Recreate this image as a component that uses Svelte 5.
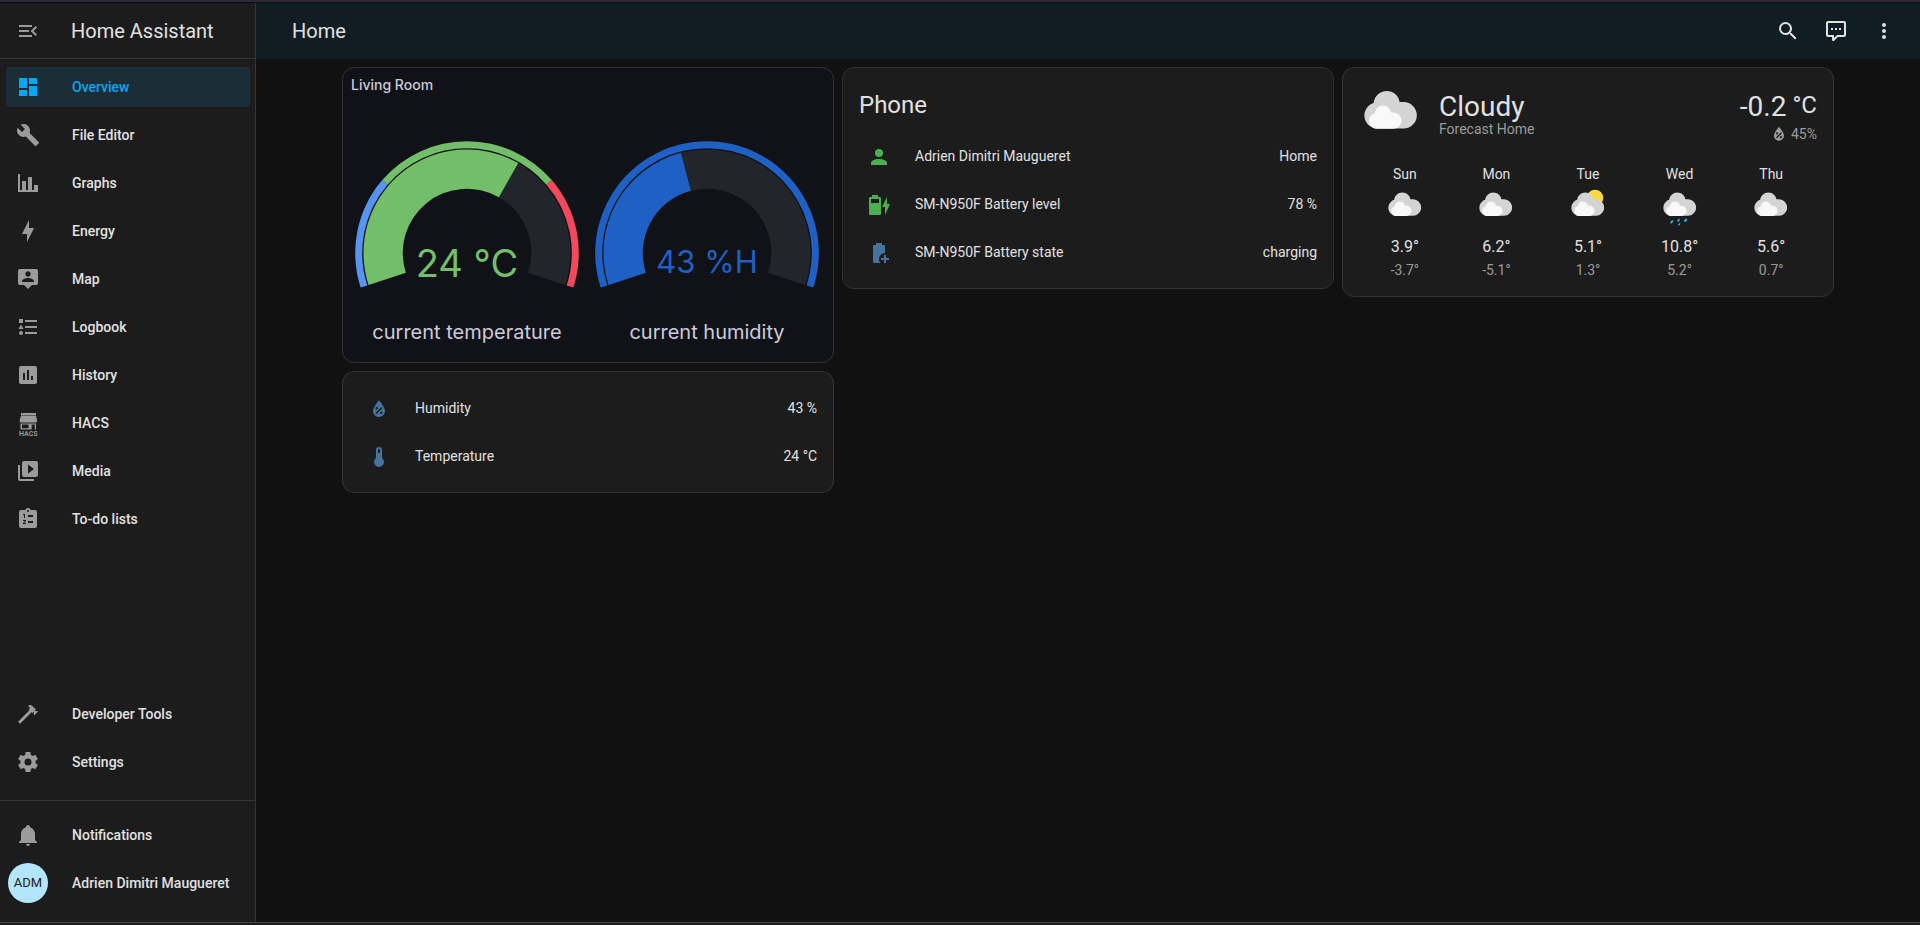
<script>
  const icons = {
    menuOpen: 'M21,15.61L19.59,17L14.58,12L19.59,7L21,8.39L17.44,12L21,15.61M3,6H16V8H3V6M3,13V11H13V13H3M3,18V16H16V18H3Z',
    dashboard: 'M13,3V9H21V3M13,21H21V11H13M3,21H11V15H3M3,13H11V3H3V13Z',
    wrench: 'M22.7,19L13.6,9.9C14.5,7.6 14,4.9 12.1,3C10.1,1 7.1,0.6 4.7,1.7L9,6L6,9L1.6,4.7C0.4,7.1 0.9,10.1 2.9,12.1C4.8,14 7.5,14.5 9.8,13.6L18.9,22.7C19.3,23.1 19.9,23.1 20.3,22.7L22.6,20.4C23.1,20 23.1,19.3 22.7,19Z',
    chartBar: 'M22,21H2V3H4V19H6V10H10V19H12V6H16V19H18V14H22V21Z',
    bolt: 'M11 15H6L13 1V9H18L11 23V15Z',
    map: 'M20,2A2,2 0 0,1 22,4V16A2,2 0 0,1 20,18H16L12,22L8,18H4A2,2 0 0,1 2,16V4A2,2 0 0,1 4,2H20M12,4.3C10.5,4.3 9.3,5.5 9.3,7C9.3,8.5 10.5,9.7 12,9.7C13.5,9.7 14.7,8.5 14.7,7C14.7,5.5 13.5,4.3 12,4.3M18,15V14.1C18,12.1 14,11 12,11C10,11 6,12.1 6,14.1V15H18Z',
    logbook: 'M5,9.5L7.5,14H2.5L5,9.5M3,4H7V8H3V4M5,20A2,2 0 0,0 7,18A2,2 0 0,0 5,16A2,2 0 0,0 3,18A2,2 0 0,0 5,20M9,5V7H21V5H9M9,19H21V17H9V19M9,13H21V11H9V13Z',
    history: 'M19,3H5A2,2 0 0,0 3,5V19A2,2 0 0,0 5,21H19A2,2 0 0,0 21,19V5A2,2 0 0,0 19,3M9,17H7V10H9V17M13,17H11V7H13V17M17,17H15V13H17V17Z',
    media: 'M4,6H2V20A2,2 0 0,0 4,22H18V20H4V6M20,2H8A2,2 0 0,0 6,4V16A2,2 0 0,0 8,18H20A2,2 0 0,0 22,16V4A2,2 0 0,0 20,2M12,14.5V5.5L18,10L12,14.5Z',
    todo: 'M19,3H14.82C14.4,1.84 13.3,1 12,1C10.7,1 9.6,1.84 9.18,3H5A2,2 0 0,0 3,5V19A2,2 0 0,0 5,21H19A2,2 0 0,0 21,19V5A2,2 0 0,0 19,3M12,3A1,1 0 0,1 13,4A1,1 0 0,1 12,5A1,1 0 0,1 11,4A1,1 0 0,1 12,3M7,8V7H9V11H8V8H7M7,13H10V14.1L8.2,16H10V17H7V15.9L8.8,14H7V13M12,8H17V10H12V8M12,14H17V16H12V14Z',
    hammer: 'M2,19.63L13.43,8.2L12.72,7.5L14.14,6.07L12,3.89C13.2,2.7 15.09,2.7 16.27,3.89L19.87,7.5L18.45,8.91H21.29L22,9.62L18.45,13.21L17.74,12.5V9.62L16.27,11.04L15.56,10.33L4.13,21.76L2,19.63Z',
    cog: 'M12,15.5A3.5,3.5 0 0,1 8.5,12A3.5,3.5 0 0,1 12,8.5A3.5,3.5 0 0,1 15.5,12A3.5,3.5 0 0,1 12,15.5M19.43,12.97C19.47,12.65 19.5,12.33 19.5,12C19.5,11.67 19.47,11.34 19.43,11L21.54,9.37C21.73,9.22 21.78,8.95 21.66,8.73L19.66,5.27C19.54,5.05 19.27,4.96 19.05,5.05L16.56,6.05C16.04,5.66 15.5,5.32 14.87,5.07L14.5,2.42C14.46,2.18 14.25,2 14,2H10C9.75,2 9.54,2.18 9.5,2.42L9.13,5.07C8.5,5.32 7.96,5.66 7.44,6.05L4.95,5.05C4.73,4.96 4.46,5.05 4.34,5.27L2.34,8.73C2.21,8.95 2.27,9.22 2.46,9.37L4.57,11C4.53,11.34 4.5,11.67 4.5,12C4.5,12.33 4.53,12.65 4.57,12.97L2.46,14.63C2.27,14.78 2.21,15.05 2.34,15.27L4.34,18.73C4.46,18.95 4.73,19.03 4.95,18.95L7.44,17.94C7.96,18.34 8.5,18.68 9.13,18.93L9.5,21.58C9.54,21.82 9.75,22 10,22H14C14.25,22 14.46,21.82 14.5,21.58L14.87,18.93C15.5,18.67 16.04,18.34 16.56,17.94L19.05,18.95C19.27,19.03 19.54,18.95 19.66,18.73L21.66,15.27C21.78,15.05 21.73,14.78 21.54,14.63L19.43,12.97Z',
    bell: 'M21,19V20H3V19L5,17V11C5,7.9 7.03,5.17 10,4.29C10,4.19 10,4.1 10,4A2,2 0 0,1 12,2A2,2 0 0,1 14,4C14,4.1 14,4.19 14,4.29C16.97,5.17 19,7.9 19,11V17L21,19M14,21A2,2 0 0,1 12,23A2,2 0 0,1 10,21',
    magnify: 'M9.5,3A6.5,6.5 0 0,1 16,9.5C16,11.11 15.41,12.59 14.44,13.73L14.71,14H15.5L20.5,19L19,20.5L14,15.5V14.71L13.73,14.44C12.59,15.41 11.11,16 9.5,16A6.5,6.5 0 0,1 3,9.5A6.5,6.5 0 0,1 9.5,3M9.5,5C7,5 5,7 5,9.5C5,12 7,14 9.5,14C12,14 14,12 14,9.5C14,7 12,5 9.5,5Z',
    comment: 'M9,22A1,1 0 0,1 8,21V18H4A2,2 0 0,1 2,16V4C2,2.89 2.9,2 4,2H20A2,2 0 0,1 22,4V16A2,2 0 0,1 20,18H13.9L10.2,21.71C10,21.9 9.75,22 9.5,22V22H9M10,16V19.08L13.08,16H20V4H4V16H10M17,11H15V9H17V11M13,11H11V9H13V11M9,11H7V9H9V11Z',
    dots: 'M12,16A2,2 0 0,1 14,18A2,2 0 0,1 12,20A2,2 0 0,1 10,18A2,2 0 0,1 12,16M12,10A2,2 0 0,1 14,12A2,2 0 0,1 12,14A2,2 0 0,1 10,12A2,2 0 0,1 12,10M12,4A2,2 0 0,1 14,6A2,2 0 0,1 12,8A2,2 0 0,1 10,6A2,2 0 0,1 12,4Z',
    account: 'M12,4A4,4 0 0,1 16,8A4,4 0 0,1 12,12A4,4 0 0,1 8,8A4,4 0 0,1 12,4M12,14C16.42,14 20,15.79 20,18V20H4V18C4,15.79 7.58,14 12,14Z',
    batteryCharging: 'M23,11H20V4L15,14H18V22M12.67,4H11V2H5V4H3.33A1.33,1.33 0 0,0 2,5.33V20.67C2,21.4 2.6,22 3.33,22H12.67C13.4,22 14,21.4 14,20.67V5.33A1.33,1.33 0 0,0 12.67,4M12,10H4V6H12V10Z',
    batteryPlus: 'M16.67,4H15V2H9V4H7.33A1.33,1.33 0 0,0 6,5.33V20.67C6,21.4 6.6,22 7.33,22H13.5A6,6 0 0,1 18,12.1V5.33A1.33,1.33 0 0,0 16.67,4M17,14V17H14V19H17V22H19V19H22V17H19V14H17Z',
    waterPercent: 'M12,3.25C12,3.25 6,10 6,14C6,17.32 8.69,20 12,20A6,6 0 0,0 18,14C18,10 12,3.25 12,3.25M14.47,9.97L15.53,11.03L9.53,17.03L8.47,15.97M9.75,10A1.25,1.25 0 0,1 11,11.25A1.25,1.25 0 0,1 9.75,12.5A1.25,1.25 0 0,1 8.5,11.25A1.25,1.25 0 0,1 9.75,10M14.25,14.5A1.25,1.25 0 0,1 15.5,15.75A1.25,1.25 0 0,1 14.25,17A1.25,1.25 0 0,1 13,15.75A1.25,1.25 0 0,1 14.25,14.5Z',
    thermometer: 'M15 13V5A3 3 0 0 0 9 5V13A5 5 0 1 0 15 13M12 4A1 1 0 0 1 13 5V8H11V5A1 1 0 0 1 12 4Z'
  };

  const pages = [
    { label: 'Overview', icon: 'dashboard', active: true },
    { label: 'File Editor', icon: 'wrench' },
    { label: 'Graphs', icon: 'chartBar' },
    { label: 'Energy', icon: 'bolt' },
    { label: 'Map', icon: 'map' },
    { label: 'Logbook', icon: 'logbook' },
    { label: 'History', icon: 'history' },
    { label: 'HACS', icon: 'hacs' },
    { label: 'Media', icon: 'media' },
    { label: 'To-do lists', icon: 'todo' }
  ];
  const tools = [
    { label: 'Developer Tools', icon: 'hammer' },
    { label: 'Settings', icon: 'cog' }
  ];

  const climate = [
    { label: 'Humidity', value: '43 %', icon: 'waterPercent', tone: 'blue' },
    { label: 'Temperature', value: '24 °C', icon: 'thermometer', tone: 'blue' }
  ];
  const phone = [
    { label: 'Adrien Dimitri Maugueret', value: 'Home', icon: 'account', tone: 'green' },
    { label: 'SM-N950F Battery level', value: '78 %', icon: 'batteryCharging', tone: 'green' },
    { label: 'SM-N950F Battery state', value: 'charging', icon: 'batteryPlus', tone: 'blue' }
  ];

  const forecast = [
    { day: 'Sun', sky: 'cloudy', high: '3.9°', low: '-3.7°' },
    { day: 'Mon', sky: 'cloudy', high: '6.2°', low: '-5.1°' },
    { day: 'Tue', sky: 'partly', high: '5.1°', low: '1.3°' },
    { day: 'Wed', sky: 'rainy', high: '10.8°', low: '5.2°' },
    { day: 'Thu', sky: 'cloudy', high: '5.6°', low: '0.7°' }
  ];

  // Gauge angles are degrees clockwise from the top; the dial spans -108 to 108.
  const gauges = [
    {
      label: 'current temperature', value: '24 °C', color: '#73bf69', size: 38, baseline: 175, end: 29.7,
      ring: [[-108, -49.3, '#5794f2'], [-49.3, 49.3, '#73bf69'], [49.3, 108, '#f2495c']]
    },
    {
      label: 'current humidity', value: '43 %H', color: '#1f60c4', size: 31, baseline: 171, end: -14.6,
      ring: [[-108, 108, '#1f60c4']]
    }
  ];

  function point(r, deg) {
    const a = (deg * Math.PI) / 180;
    return `${(120 + r * Math.sin(a)).toFixed(2)},${(151 - r * Math.cos(a)).toFixed(2)}`;
  }
  function band(from, to, outer, inner) {
    const large = to - from > 180 ? 1 : 0;
    return `M${point(outer, from)}A${outer},${outer} 0 ${large},1 ${point(outer, to)}L${point(inner, to)}A${inner},${inner} 0 ${large},0 ${point(inner, from)}Z`;
  }
</script>

{#snippet icon(name)}
  <svg class="icon" viewBox="0 0 24 24" aria-hidden="true">
    {#if name === 'hacs'}
      <path d="M5,2H20V4H5ZM5,4.6H20L21,9V10.5Q21,11.5 20,11.5H4.5Q3.7,11.5 3.7,10.5V9ZM4.5,12.5H20V18.5H18.8V13.6H15.6V18.5H4.5ZM6,13.6V17.2H12.5V13.6Z" fill-rule="evenodd" />
      <text class="hacs" x="12.3" y="24.6" text-anchor="middle">HACS</text>
    {:else}
      <path d={icons[name]} fill-rule="evenodd" />
    {/if}
  </svg>
{/snippet}

{#snippet sky(kind)}
  <svg class="sky" viewBox="0 0 17 17" aria-hidden="true">
    {#if kind === 'partly'}
      <circle cx="11.5" cy="4.2" r="3.48" fill="#fdd93c" />
    {/if}
    <path fill="#d4d4d4" d="m3.8863 5.035c-0.54892 0.16898-1.04 0.46637-1.4372 0.8636-0.63077 0.63041-1.0206 1.4933-1.0206 2.455 0 1.9251 1.5589 3.4682 3.4837 3.4682h6.9688c1.9251 0 3.484-1.5981 3.484-3.5232 0-1.9251-1.5589-3.5232-3.484-3.5232h-1.0834c-0.25294-1.6916-1.6986-2.9083-3.4463-2.9083-1.7995 0-3.2805 1.4153-3.465 3.1679" />
    <path fill="#f9f9f9" d="m4.1996 7.6995c-0.33902 0.10407-0.64276 0.28787-0.88794 0.5334-0.39017 0.38982-0.63147 0.92322-0.63147 1.5176 0 1.1896 0.96414 2.1431 2.1537 2.1431h4.3071c1.1896 0 2.153-0.98742 2.153-2.1777 0-1.1896-0.96344-2.1777-2.153-2.1777h-0.66992c-0.15593-1.0449-1.0499-1.7974-2.1297-1.7974-1.112 0-2.0274 0.87524-2.1417 1.9586" />
    {#if kind === 'rainy'}
      <g fill="#30b3ff">
        <ellipse cx="5" cy="14.4" rx="0.45" ry="0.85" transform="rotate(40 5 14.4)" />
        <ellipse cx="7.9" cy="13.7" rx="0.4" ry="0.7" transform="rotate(40 7.9 13.7)" />
        <ellipse cx="10.9" cy="13.7" rx="0.45" ry="0.85" transform="rotate(40 10.9 13.7)" />
        <ellipse cx="8.2" cy="15.4" rx="0.35" ry="0.6" transform="rotate(40 8.2 15.4)" />
      </g>
    {/if}
  </svg>
{/snippet}

{#snippet navItem(item)}
  <li>
    <a class="nav-item" class:active={item.active} href="#{item.icon}" aria-current={item.active ? 'page' : undefined}>
      {@render icon(item.icon)}
      <span>{item.label}</span>
    </a>
  </li>
{/snippet}

{#snippet entities(rows)}
  <ul class="entities">
    {#each rows as row}
      <li class="entity">
        <span class="badge {row.tone}">{@render icon(row.icon)}</span>
        <span class="entity-name">{row.label}</span>
        <span>{row.value}</span>
      </li>
    {/each}
  </ul>
{/snippet}

<div class="page">
  <div class="shell">
    <aside class="sidebar">
      <div class="sidebar-head">
        <button class="menu-button" aria-label="Toggle sidebar">{@render icon('menuOpen')}</button>
        <span class="brand">Home Assistant</span>
      </div>
      <nav class="nav">
        <ul class="nav-list">
          {#each pages as item}{@render navItem(item)}{/each}
        </ul>
        <ul class="nav-list">
          {#each tools as item}{@render navItem(item)}{/each}
        </ul>
      </nav>
      <ul class="nav-list account">
        {@render navItem({ label: 'Notifications', icon: 'bell' })}
        <li>
          <a class="nav-item user" href="#profile">
            <span class="avatar">ADM</span>
            <span>Adrien Dimitri Maugueret</span>
          </a>
        </li>
      </ul>
    </aside>

    <div class="main">
      <header class="toolbar">
        <h1>Home</h1>
        <button aria-label="Search">{@render icon('magnify')}</button>
        <button aria-label="Assist">{@render icon('comment')}</button>
        <button aria-label="More options">{@render icon('dots')}</button>
      </header>

      <main class="columns">
        <div class="column">
          <section class="card living">
            <h2>Living Room</h2>
            <div class="gauges">
              {#each gauges as g}
                <figure>
                  <svg class="gauge" viewBox="0 0 240 208" role="img" aria-label="{g.label} {g.value}">
                    <path d={band(-108, 108, 103.5, 64.3)} fill="#22252b" />
                    <path d={band(-108, g.end, 103.5, 64.3)} fill={g.color} />
                    {#each g.ring as [from, to, color]}
                      <path d={band(from, to, 111.8, 104.8)} fill={color} />
                    {/each}
                    <text x="120" y={g.baseline} font-size={g.size} fill={g.color} text-anchor="middle">{g.value}</text>
                  </svg>
                  <figcaption>{g.label}</figcaption>
                </figure>
              {/each}
            </div>
          </section>
          <section class="card">{@render entities(climate)}</section>
        </div>

        <div class="column">
          <section class="card">
            <h2 class="card-title">Phone</h2>
            {@render entities(phone)}
          </section>
        </div>

        <div class="column">
          <section class="card weather">
            <div class="now">
              <div class="now-icon">{@render sky('cloudy')}</div>
              <div class="now-text">
                <div class="now-state">Cloudy</div>
                <div class="now-place">Forecast Home</div>
              </div>
              <div class="now-values">
                <div class="now-temp"><span>-0.2</span><span class="unit">°C</span></div>
                <div class="now-humidity">{@render icon('waterPercent')}<span>45%</span></div>
              </div>
            </div>
            <div class="forecast">
              {#each forecast as f}
                <div class="day">
                  <div class="day-name">{f.day}</div>
                  <div class="day-icon">{@render sky(f.sky)}</div>
                  <div class="high">{f.high}</div>
                  <div class="low">{f.low}</div>
                </div>
              {/each}
            </div>
          </section>
        </div>
      </main>
    </div>
  </div>
</div>

<style>
  :global(body) {
    margin: 0;
    background: #111111;
  }
  .page {
    box-sizing: border-box;
    min-height: 100vh;
    display: flex;
    border-top: 2px solid #2b2a33;
    border-bottom: 2px solid #1c1a1d;
    background: #111111;
    color: #e1e1e1;
    font-family: Roboto, "Noto Sans", sans-serif;
    font-size: 14px;
    line-height: 20px;
  }
  .shell {
    flex: 1;
    display: flex;
    border-top: 1px solid #0c0c0d;
    border-bottom: 1px solid #484848;
  }
  ul {
    list-style: none;
    margin: 0;
    padding: 0;
  }
  h1,
  h2 {
    margin: 0;
    font-weight: 400;
  }
  button {
    display: flex;
    align-items: center;
    justify-content: center;
    width: 48px;
    height: 48px;
    padding: 0;
    border: 0;
    background: none;
    color: inherit;
    cursor: pointer;
  }
  .icon {
    display: block;
    flex: none;
    width: 24px;
    height: 24px;
    fill: currentColor;
    overflow: visible;
  }
  .hacs {
    font: 700 7px Roboto, sans-serif;
  }

  .sidebar {
    box-sizing: border-box;
    flex: none;
    width: 256px;
    display: flex;
    flex-direction: column;
    border-right: 1px solid #363636;
    background: #1c1c1c;
  }
  .sidebar-head {
    box-sizing: border-box;
    height: 56px;
    display: flex;
    align-items: center;
    gap: 19px;
    padding-left: 4px;
    border-bottom: 1px solid #363636;
  }
  .menu-button {
    color: #9b9b9b;
  }
  .brand {
    font-size: 20px;
  }
  .nav {
    flex: 1;
    display: flex;
    flex-direction: column;
    justify-content: space-between;
    padding: 8px 0 18px;
  }
  .nav-list {
    display: flex;
    flex-direction: column;
    gap: 8px;
    padding: 0 5px 0 6px;
  }
  .nav-item {
    display: flex;
    align-items: center;
    gap: 32px;
    height: 40px;
    padding-left: 10px;
    border-radius: 4px;
    color: #e1e1e1;
    font-weight: 500;
    text-decoration: none;
  }
  .nav-item .icon {
    color: #9b9b9b;
  }
  .nav-item.active {
    background: #1b2d36;
  }
  .nav-item.active,
  .nav-item.active .icon {
    color: #03a9f4;
  }
  .account {
    padding-top: 14px;
    padding-bottom: 19px;
    border-top: 1px solid #363636;
  }
  .nav-item.user {
    gap: 24px;
    padding-left: 2px;
  }
  .avatar {
    width: 40px;
    border-radius: 50%;
    background: #b3e5fc;
    color: #212121;
    font-size: 13px;
    font-weight: 400;
    line-height: 40px;
    text-align: center;
  }

  .main {
    flex: 1;
    min-width: 0;
  }
  .toolbar {
    display: flex;
    align-items: center;
    height: 56px;
    padding: 0 12px 0 36px;
    background: #101e24;
  }
  .toolbar h1 {
    flex: 1;
    font-size: 20px;
  }
  .columns {
    display: grid;
    grid-template-columns: repeat(3, minmax(0, 1fr));
    gap: 8px;
    max-width: 1492px;
    margin: 0 auto;
    padding: 8px 4px;
  }
  .column {
    display: flex;
    flex-direction: column;
    gap: 8px;
  }
  .card {
    border: 1px solid #333333;
    border-radius: 12px;
    background: #1c1c1c;
  }

  .living {
    background: #111217;
    color: #ccccdc;
    font-family: Inter, sans-serif;
  }
  .living h2 {
    padding: 7px 8px;
    font-size: 14px;
    font-weight: 500;
  }
  .gauges {
    display: grid;
    grid-template-columns: 1fr 1fr;
    padding: 0 6px 8px 4px;
  }
  figure {
    margin: 0;
    text-align: center;
  }
  .gauge {
    display: block;
    width: 100%;
  }
  figcaption {
    font-size: 20px;
    line-height: 44px;
  }

  .card-title {
    padding: 13px 16px 7px;
    font-size: 24px;
    line-height: 48px;
  }
  .entities {
    display: flex;
    flex-direction: column;
    gap: 8px;
    padding: 16px;
  }
  .card-title + .entities {
    padding-top: 0;
  }
  .entity {
    display: flex;
    align-items: center;
    height: 40px;
  }
  .badge {
    display: flex;
    justify-content: center;
    width: 40px;
    padding-top: 2px;
  }
  .green {
    color: #4caf50;
  }
  .blue {
    color: #44739e;
  }
  .entity-name {
    flex: 1;
    padding-left: 16px;
  }

  .weather {
    padding: 16px;
  }
  .sky {
    display: block;
    width: 100%;
    height: 100%;
  }
  .now {
    display: flex;
    gap: 16px;
    height: 64px;
  }
  .now-icon {
    width: 64px;
    height: 64px;
  }
  .now-text {
    flex: 1;
    padding-top: 6px;
  }
  .now-state,
  .now-temp {
    font-size: 28px;
    line-height: 34px;
  }
  .now-place {
    color: #9b9b9b;
    line-height: 10px;
  }
  .now-values {
    padding-top: 6px;
  }
  .now-temp {
    display: flex;
    justify-content: flex-end;
    gap: 6px;
  }
  .unit {
    font-size: 24px;
    line-height: 30px;
  }
  .now-humidity {
    display: flex;
    align-items: center;
    justify-content: flex-end;
    gap: 2px;
    color: #9b9b9b;
    line-height: 18px;
  }
  .now-humidity .icon {
    width: 20px;
    height: 18px;
  }
  .now-humidity .icon {
    height: 20px;
  }
  .forecast {
    display: grid;
    grid-template-columns: repeat(5, 1fr);
    padding-top: 16px;
    text-align: center;
  }
  .day-icon {
    width: 40px;
    height: 40px;
    margin: 4px auto;
  }
  .high {
    padding-top: 1px;
    font-size: 16px;
    line-height: 27px;
  }
  .low {
    color: #9b9b9b;
  }
</style>
